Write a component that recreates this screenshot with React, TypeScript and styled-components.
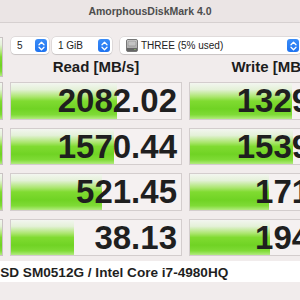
import React from 'react';
import styled, { createGlobalStyle } from 'styled-components';

const GlobalStyle = createGlobalStyle`
	html, body {
		margin: 0;
		padding: 0;
		overflow: hidden;
		background: #f1ecec;
	}
	body {
		width: 300px;
		height: 300px;
		font-family: "Liberation Sans", Arial, sans-serif;
	}
`;

const results = [
	{ label: 'SEQ1M\nQD8', read: '2082.02', write: '1329.48', readBar: 106, writeBar: 102 },
	{ label: 'SEQ1M\nQD1', read: '1570.44', write: '1539.13', readBar: 103, writeBar: 103 },
	{ label: 'RND4K\nQD64', read: '521.45', write: '171.07', readBar: 91, writeBar: 79 },
	{ label: 'RND4K\nQD1', read: '38.13', write: '194.36', readBar: 63, writeBar: 80 },
];

const Stepper = () => (
	<StepBtn>
		<svg width="7" height="10" viewBox="0 0 7 10">
			<path d="M1 3.8 L3.5 1.3 L6 3.8" fill="none" stroke="#fff" strokeWidth="1.3" strokeLinecap="round" strokeLinejoin="round" />
			<path d="M1 6.2 L3.5 8.7 L6 6.2" fill="none" stroke="#fff" strokeWidth="1.3" strokeLinecap="round" strokeLinejoin="round" />
		</svg>
	</StepBtn>
);

const DriveIcon = () => (
	<svg width="12" height="13" viewBox="0 0 12 13">
		<defs>
			<linearGradient id="drv" x1="0" y1="0" x2="0" y2="1">
				<stop offset="0" stopColor="#d9d9d9" />
				<stop offset="1" stopColor="#9c9c9c" />
			</linearGradient>
		</defs>
		<rect x="0.5" y="0.5" width="11" height="12" rx="1.5" fill="url(#drv)" stroke="#777" />
		<rect x="2" y="2" width="8" height="5" rx="1" fill="#c4c4c4" stroke="#8a8a8a" strokeWidth="0.6" />
		<rect x="1" y="9" width="10" height="3" fill="#666" />
		<circle cx="9" cy="10.5" r="0.6" fill="#9be36a" />
	</svg>
);

const App = () => {
	return (
		<>
			<GlobalStyle />
			<Window>
				<TitleBar>AmorphousDiskMark 4.0</TitleBar>
				<Body>
					<TopRow>
						<SideButton tall>All</SideButton>
						<Controls>
							<SelectRow>
								<Select w={38}>
									<SelectText>5</SelectText>
									<Stepper />
								</Select>
								<Select w={60}>
									<SelectText>1 GiB</SelectText>
									<Stepper />
								</Select>
								<Select w={181} gapLeft={5}>
									<DriveIcon />
									<SelectText>THREE (5% used)</SelectText>
									<Stepper />
								</Select>
							</SelectRow>
							<Headers>
								<HeaderCell>Read [MB/s]</HeaderCell>
								<HeaderCell>Write [MB/s]</HeaderCell>
							</Headers>
						</Controls>
					</TopRow>
					<Rows>
						{results.map((r) => (
							<Row key={r.label}>
								<SideButton>{r.label}</SideButton>
								<DataCell>
									<Bar style={{ width: r.readBar }} />
									<Value>{r.read}</Value>
								</DataCell>
								<DataCell>
									<Bar style={{ width: r.writeBar }} />
									<Value>{r.write}</Value>
								</DataCell>
							</Row>
						))}
					</Rows>
					<InfoField>APPLE SSD SM0512G / Intel Core i7-4980HQ</InfoField>
				</Body>
			</Window>
		</>
	);
};

const greenGlass = `
	linear-gradient(
		to bottom,
		#f3f6f0 0%,
		#e4f1d8 18%,
		#ace670 38%,
		#80db31 50%,
		#70d324 72%,
		#7fdb36 88%,
		#b3eb80 100%
	)
`;

const Window = styled.div`
	width: 440px;
	margin-left: -70px;
	background: #f1ecec;
	height: 300px;
`;

const TitleBar = styled.div`
	height: 22px;
	border-bottom: 1px solid #d6d0d0;
	background: #ebe5e5;
	display: flex;
	align-items: center;
	justify-content: center;
	font-weight: bold;
	font-size: 10.5px;
	color: #4d4d4d;
`;

const Body = styled.div`
	display: flex;
	flex-direction: column;
	padding: 14px 9px 0 0;
`;

const TopRow = styled.div`
	display: flex;
	gap: 7px;
	height: 40px;
`;

const SideButton = styled.div<{ tall?: boolean }>`
	box-sizing: border-box;
	width: 73px;
	height: ${(p) => (p.tall ? '40px' : '100%')};
	border: 1px solid #c9c3c3;
	background: ${greenGlass};
	display: flex;
	align-items: center;
	justify-content: center;
	text-align: center;
	white-space: pre-line;
	font-weight: bold;
	font-size: 12px;
	color: #1f1f1f;
	flex-shrink: 0;
`;

const Controls = styled.div`
	display: flex;
	flex-direction: column;
	width: 351px;
`;

const SelectRow = styled.div`
	display: flex;
	gap: 3px;
	height: 17px;
	padding-left: 1px;
`;

const Select = styled.div<{ w: number; gapLeft?: number }>`
	box-sizing: border-box;
	width: ${(p) => p.w}px;
	margin-left: ${(p) => p.gapLeft || 0}px;
	height: 17px;
	background: #fff;
	border-radius: 4px;
	box-shadow: 0 0 0 0.5px rgba(0, 0, 0, 0.14), 0 1px 1px rgba(0, 0, 0, 0.1);
	display: flex;
	align-items: center;
	gap: 3px;
	padding: 0 2px 0 6px;
	font-size: 10px;
	color: #222;
`;

const SelectText = styled.span`
	flex: 1;
	white-space: nowrap;
`;

const StepBtn = styled.div`
	width: 12px;
	height: 13px;
	border-radius: 3px;
	background: linear-gradient(to bottom, #3a8cf7, #1f73f0);
	display: flex;
	align-items: center;
	justify-content: center;
	flex-shrink: 0;
`;

const Headers = styled.div`
	display: flex;
	gap: 7px;
`;

const HeaderCell = styled.div`
	width: 172px;
	text-align: center;
	font-weight: bold;
	font-size: 15px;
	line-height: 20px;
	padding-top: 3px;
	color: #1c1c1c;
`;

const Rows = styled.div`
	display: flex;
	flex-direction: column;
	gap: 8px;
	margin-top: 5px;
`;

const Row = styled.div`
	display: flex;
	gap: 7px;
	height: 37.5px;
`;

const DataCell = styled.div`
	box-sizing: border-box;
	position: relative;
	width: 172px;
	border: 1px solid #d3cdcd;
	background: #f5f1f1;
	display: flex;
	align-items: center;
	justify-content: flex-end;
	padding-right: 4px;
	overflow: hidden;
`;

const Bar = styled.div`
	position: absolute;
	left: 0;
	top: 0;
	bottom: 0;
	background: ${greenGlass};
`;

const Value = styled.span`
	position: relative;
	font-weight: bold;
	font-size: 33px;
	line-height: 1;
	color: #1f1f1f;
	white-space: nowrap;
`;

const InfoField = styled.div`
	margin-top: 5px;
	height: 21px;
	box-sizing: border-box;
	background: #fff;
	padding: 2px 0 0 12px;
	line-height: 19px;
	font-weight: bold;
	font-size: 13.6px;
	color: #1f1f1f;
	white-space: nowrap;
	width: 431px;
`;

export default App;
